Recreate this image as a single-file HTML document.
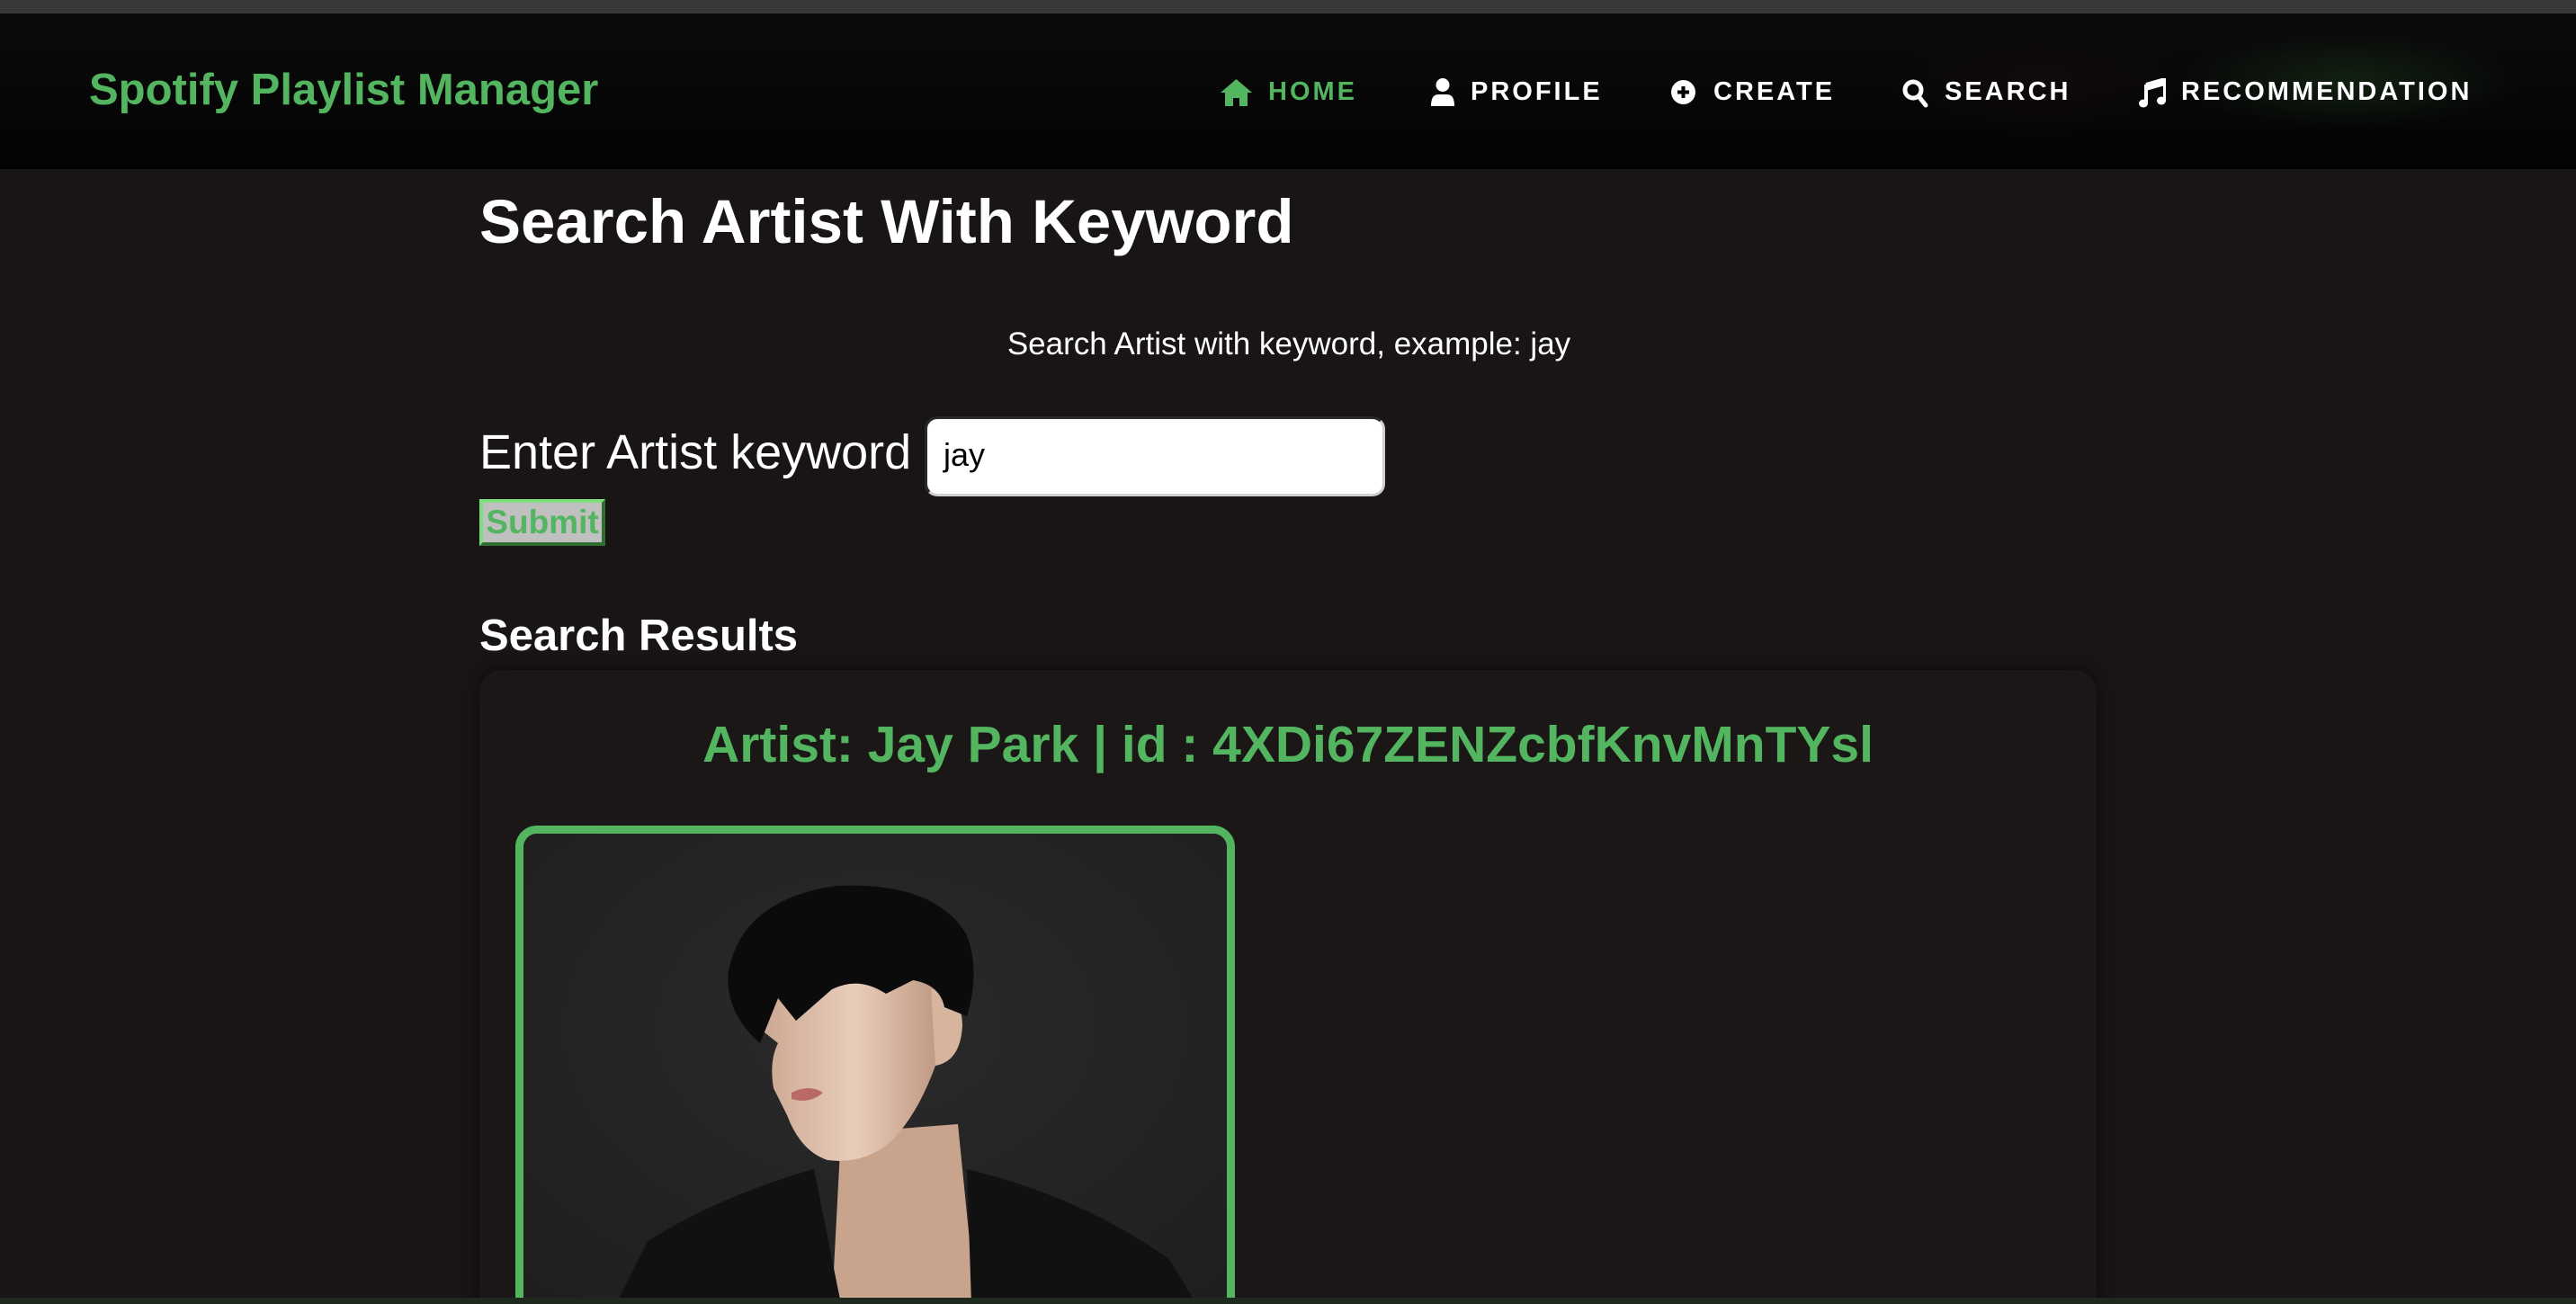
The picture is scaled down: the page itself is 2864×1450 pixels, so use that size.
<!DOCTYPE html>
<html><head><meta charset="utf-8"><style>
*{margin:0;padding:0;box-sizing:border-box}
html,body{width:2864px;height:1450px;overflow:hidden;background:#181514;font-family:"Liberation Sans",sans-serif;color:#fff;position:relative}
.a{position:absolute;white-space:nowrap}
.top{left:0;top:0;width:2864px;height:15px;background:#383838}
.nav{left:0;top:15px;width:2864px;height:173px;background:linear-gradient(#0b0b0b,#030303);overflow:hidden}
.glow{position:absolute;left:2420px;top:20px;width:380px;height:110px;background:radial-gradient(ellipse at center,rgba(40,90,40,.3),rgba(0,0,0,0) 70%)}
.glow2{position:absolute;left:2100px;top:10px;width:340px;height:130px;background:radial-gradient(ellipse at center,rgba(60,20,20,.18),rgba(0,0,0,0) 70%)}
.brand{left:99px;top:72px;font-size:49px;font-weight:bold;color:#53b55f;line-height:56px}
.ni{top:84px;font-size:29px;font-weight:bold;letter-spacing:3px;line-height:36px;color:#fff}
.ic{position:absolute}
</style></head><body>
<div class="a top"></div>
<div class="a nav"><div class="glow2"></div><div class="glow"></div></div>
<div class="a brand">Spotify Playlist Manager</div>

<svg class="ic" style="left:1357px;top:88px" width="35" height="30" viewBox="0 0 35 30"><path d="M17.5 0 L35 15 L30 15 L30 30 L21 30 L21 21 L14 21 L14 30 L5 30 L5 15 L0 15 Z" fill="#53b55f"/></svg>
<div class="a ni" style="left:1410px;color:#53b55f">HOME</div>

<svg class="ic" style="left:1591px;top:87px" width="26" height="31" viewBox="0 0 26 31"><circle cx="13" cy="7.5" r="7.5" fill="#fff"/><path d="M0 31 Q0 18 8 18 L18 18 Q26 18 26 31 Z" fill="#fff"/></svg>
<div class="a ni" style="left:1635px">PROFILE</div>

<svg class="ic" style="left:1858px;top:89px" width="27" height="27" viewBox="0 0 27 27"><circle cx="13.5" cy="13.5" r="13.5" fill="#fff"/><path d="M13.5 7v13M7 13.5h13" stroke="#000" stroke-width="4"/></svg>
<div class="a ni" style="left:1905px">CREATE</div>

<svg class="ic" style="left:2115px;top:88px" width="30" height="32" viewBox="0 0 30 32"><circle cx="12" cy="12" r="9" fill="none" stroke="#fff" stroke-width="5"/><path d="M18 19l8 10" stroke="#fff" stroke-width="5" stroke-linecap="round"/></svg>
<div class="a ni" style="left:2162px">SEARCH</div>

<svg class="ic" style="left:2378px;top:87px" width="30" height="33" viewBox="0 0 30 33"><path d="M8 7 L29 1 L29 25 M8 7 L8 28" stroke="#fff" stroke-width="4" fill="none"/><path d="M8 7 L29 1 L29 8 L8 14Z" fill="#fff"/><ellipse cx="5" cy="28" rx="5" ry="4.5" fill="#fff"/><ellipse cx="25" cy="25" rx="5" ry="4.5" fill="#fff"/></svg>
<div class="a ni" style="left:2425px">RECOMMENDATION</div>

<div class="a" style="left:533px;top:207px;font-size:69px;font-weight:bold;line-height:80px">Search Artist With Keyword</div>
<div class="a" style="left:533px;width:1800px;top:363px;text-align:center;font-size:35px;line-height:40px">Search Artist with keyword, example: jay</div>
<div class="a" style="left:533px;top:471px;font-size:54px;line-height:64px">Enter Artist keyword</div>
<div class="a" style="left:1028px;top:463px;width:512px;height:89px;background:#fff;border:3px solid #cfcfcf;border-top-color:#2a2a2a;border-left-color:#2a2a2a;border-radius:14px;color:#000;font-size:36px;line-height:80px;padding-left:18px">jay</div>
<div class="a" style="left:533px;top:555px;width:140px;height:52px;background:#c0c0c0;border:4px solid #4caf50;border-top-color:#7de07d;border-left-color:#7de07d;border-bottom-color:#2e6e30;border-right-color:#2e6e30;color:#53b55f;font-weight:bold;font-size:37px;line-height:44px;text-align:center">Submit</div>
<div class="a" style="left:533px;top:678px;font-size:49px;font-weight:bold;line-height:58px">Search Results</div>

<div class="a" style="left:533px;top:745px;width:1798px;height:720px;background:#1a1716;border-radius:24px;box-shadow:0 0 18px rgba(0,0,0,.55)"></div>
<div class="a" style="left:533px;width:1798px;top:794px;text-align:center;font-size:57px;font-weight:bold;color:#53b55f;line-height:68px">Artist: Jay Park | id : 4XDi67ZENZcbfKnvMnTYsl</div>

<div class="a" style="left:573px;top:918px;width:800px;height:560px;border:9px solid #53b55f;border-radius:24px;overflow:hidden;background:#242424">
<svg style="position:absolute;left:-582px;top:-927px" width="2864" height="1450" viewBox="0 0 2864 1450">
<defs><radialGradient id="bg" cx="0.5" cy="0.4" r="0.7"><stop offset="0" stop-color="#2a2a2a"/><stop offset="1" stop-color="#1f1f1f"/></radialGradient>
<linearGradient id="sk" x1="0" y1="0" x2="1" y2="0"><stop offset="0" stop-color="#c9a38e"/><stop offset=".5" stop-color="#e8cdbb"/><stop offset="1" stop-color="#b48b73"/></linearGradient></defs>
<rect x="573" y="918" width="800" height="560" fill="url(#bg)"/>
<path d="M935 1260 L1065 1250 L1085 1450 L925 1450 Z" fill="#c9a48d"/>
<path d="M835 1085 Q900 1055 1040 1075 L1065 1110 Q1075 1170 1040 1185 Q1020 1240 990 1270 Q960 1295 920 1290 Q890 1280 875 1240 L860 1210 Q855 1180 865 1160 L840 1140 Z" fill="url(#sk)"/>
<path d="M1035 1100 Q1068 1095 1070 1140 Q1068 1180 1040 1185 Z" fill="#d7b49e"/>
<path d="M880 1215 Q900 1205 915 1215 Q900 1228 880 1222Z" fill="#b96a66"/>
<path d="M810 1080 Q825 1000 930 985 Q1040 980 1075 1040 Q1090 1080 1075 1130 L1050 1120 Q1045 1095 1015 1090 L985 1105 Q955 1085 925 1100 L885 1135 L865 1110 L845 1160 Q805 1125 810 1080 Z" fill="#0b0b0b"/>
<path d="M685 1450 L720 1380 Q800 1330 905 1300 L935 1450 Z" fill="#111"/>
<path d="M1075 1300 Q1200 1330 1300 1400 L1330 1450 L1080 1450 Z" fill="#111"/>
</svg>
</div>
<div class="a" style="left:0;top:1443px;width:2864px;height:7px;background:#1f2a1f"></div>
</body></html>
